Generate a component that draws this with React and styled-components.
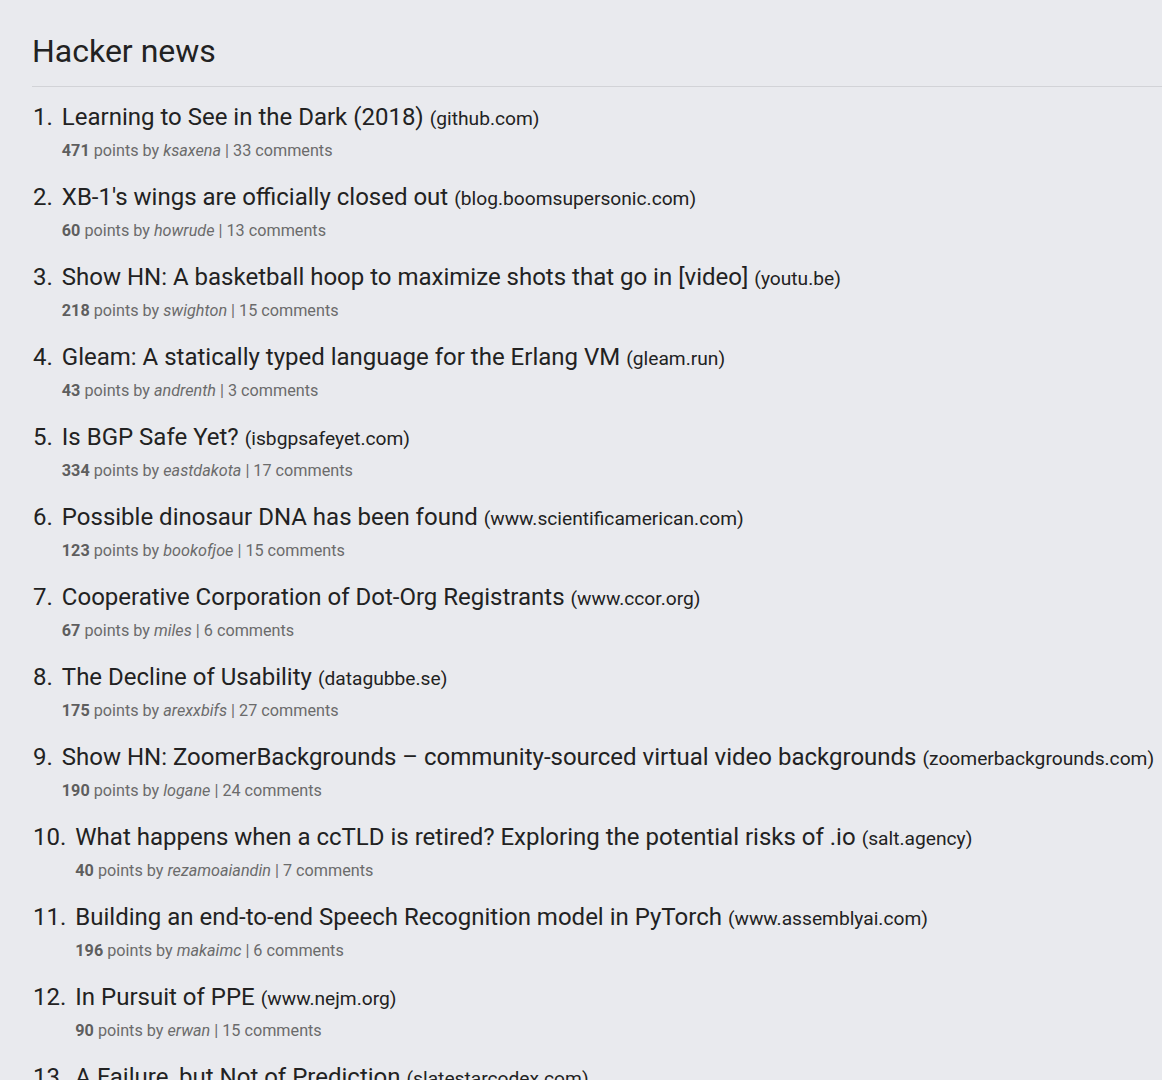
import React from "react";
import styled, { createGlobalStyle } from "styled-components";

const Global = createGlobalStyle`
  html, body { margin: 0; padding: 0; background: #e9eaee; }
  body { font-family: Roboto, "Noto Sans", sans-serif; color: #222; }
`;

const Page = styled.div`
  padding: 30px 0 0 33px;
`;

const Heading = styled.h1`
  margin: 0 0 0 -1px;
  font-size: 32px;
  font-weight: 400;
  line-height: 42px;
  color: #222;
  padding-bottom: 14px;
  border-bottom: 1px solid #d2d3d7;
`;

const List = styled.ol`
  list-style: none;
  margin: 0;
  padding: 14px 0 0;
  display: flex;
  flex-direction: column;
  gap: 14px;
`;

const Item = styled.li`
  display: flex;
  align-items: flex-start;
  gap: 9px;
  white-space: nowrap;
`;

const Num = styled.span`
  font-size: 24px;
  line-height: 32px;
  color: #222;
`;

const Body = styled.div`
  display: flex;
  flex-direction: column;
`;

const Title = styled.a`
  font-size: 24px;
  line-height: 32px;
  color: #222;
  text-decoration: none;
`;

const Site = styled.span`
  font-size: 19.2px;
  color: #222;
  margin-left: 6px;
`;

const Meta = styled.div`
  margin-top: 2px;
  font-size: 16.2px;
  line-height: 32px;
  color: #6b6b6b;
`;

const Points = styled.b`
  font-weight: 700;
  color: #5e5e5e;
`;

const User = styled.i`
  font-style: italic;
`;

const stories = [
  ["Learning to See in the Dark (2018)", "github.com", 471, "ksaxena", 33],
  ["XB-1's wings are officially closed out", "blog.boomsupersonic.com", 60, "howrude", 13],
  ["Show HN: A basketball hoop to maximize shots that go in [video]", "youtu.be", 218, "swighton", 15],
  ["Gleam: A statically typed language for the Erlang VM", "gleam.run", 43, "andrenth", 3],
  ["Is BGP Safe Yet?", "isbgpsafeyet.com", 334, "eastdakota", 17],
  ["Possible dinosaur DNA has been found", "www.scientificamerican.com", 123, "bookofjoe", 15],
  ["Cooperative Corporation of Dot-Org Registrants", "www.ccor.org", 67, "miles", 6],
  ["The Decline of Usability", "datagubbe.se", 175, "arexxbifs", 27],
  ["Show HN: ZoomerBackgrounds – community-sourced virtual video backgrounds", "zoomerbackgrounds.com", 190, "logane", 24],
  ["What happens when a ccTLD is retired? Exploring the potential risks of .io", "salt.agency", 40, "rezamoaiandin", 7],
  ["Building an end-to-end Speech Recognition model in PyTorch", "www.assemblyai.com", 196, "makaimc", 6],
  ["In Pursuit of PPE", "www.nejm.org", 90, "erwan", 15],
  ["A Failure, but Not of Prediction", "slatestarcodex.com", 211, "tosh", 40],
];

export default function App() {
  return (
    <Page>
      <Global />
      <Heading>Hacker news</Heading>
      <List>
        {stories.map(([title, site, pts, user, com], i) => (
          <Item key={i}>
            <Num>{i + 1}.</Num>
            <Body>
              <div>
                <Title href="#">{title}</Title>
                <Site>({site})</Site>
              </div>
              <Meta>
                <Points>{pts}</Points> points by <User>{user}</User> | {com} comments
              </Meta>
            </Body>
          </Item>
        ))}
      </List>
    </Page>
  );
}
